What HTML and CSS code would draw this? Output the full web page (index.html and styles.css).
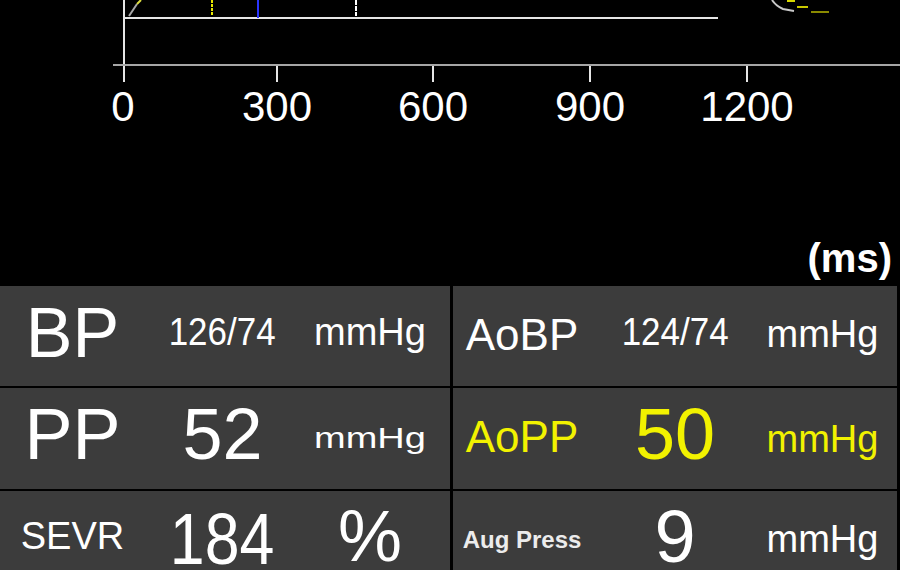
FILE: index.html
```html
<!DOCTYPE html>
<html>
<head>
<meta charset="utf-8">
<link rel="stylesheet" href="styles.css">
</head>
<body>
<div class="screen">
  <svg class="chart" width="900" height="286" viewBox="0 0 900 286">
    <line x1="124" y1="0" x2="124" y2="82" stroke="#e6e6e6" stroke-width="2"/>
    <line x1="113" y1="65" x2="900" y2="65" stroke="#a6a6a6" stroke-width="2"/>
    <line x1="124" y1="18" x2="718" y2="18" stroke="#e6e6e6" stroke-width="2"/>
    <line x1="277" y1="66" x2="277" y2="82" stroke="#e6e6e6" stroke-width="2"/>
    <line x1="433" y1="66" x2="433" y2="82" stroke="#e6e6e6" stroke-width="2"/>
    <line x1="590" y1="66" x2="590" y2="82" stroke="#e6e6e6" stroke-width="2"/>
    <line x1="747" y1="66" x2="747" y2="82" stroke="#e6e6e6" stroke-width="2"/>
    <line x1="212" y1="0" x2="212" y2="16" stroke="#e8e800" stroke-width="2" stroke-dasharray="3 1"/>
    <line x1="258" y1="0" x2="258" y2="18" stroke="#2a35ff" stroke-width="2"/>
    <line x1="356" y1="0" x2="356" y2="16" stroke="#ffffff" stroke-width="2" stroke-dasharray="5 1"/>
    <line x1="129" y1="16" x2="137" y2="4" stroke="#a8a8a8" stroke-width="2"/>
    <line x1="137" y1="4" x2="141" y2="0" stroke="#dede40" stroke-width="2"/>
    <path d="M772 0 Q776 6 783 9 L794 11" fill="none" stroke="#c8c8c8" stroke-width="2"/>
    <line x1="787" y1="1" x2="795" y2="1" stroke="#d8d800" stroke-width="2"/>
    <line x1="797" y1="7" x2="808" y2="7" stroke="#c8c800" stroke-width="2"/>
    <line x1="811" y1="12" x2="829" y2="12" stroke="#8a8a00" stroke-width="2"/>
    <g class="ticks">
      <text x="123" y="121">0</text>
      <text x="277" y="121">300</text>
      <text x="433" y="121">600</text>
      <text x="590" y="121">900</text>
      <text x="747" y="121">1200</text>
    </g>
    <text class="unit-ms" x="892" y="272">(ms)</text>
  </svg>
  <div class="panel">
    <div class="cell left">
      <span class="big r1-big">BP</span>
      <span class="frac r1-mid">126/74</span>
      <span class="unit r1-mid">mmHg</span>
    </div>
    <div class="cell right">
      <span class="label r1-mid">AoBP</span>
      <span class="frac r1-mid">124/74</span>
      <span class="unit r1-unit-r">mmHg</span>
    </div>
    <div class="cell left">
      <span class="big r2-big">PP</span>
      <span class="big r2-big">52</span>
      <span class="unit squat r2-unit">mmHg</span>
    </div>
    <div class="cell right yellow">
      <span class="label r1-mid">AoPP</span>
      <span class="big r2-big">50</span>
      <span class="unit r2-unit-r">mmHg</span>
    </div>
    <div class="cell left">
      <span class="unit r3-label">SEVR</span>
      <span class="big short narrow r3-num">184</span>
      <span class="big short r3-pct">%</span>
    </div>
    <div class="cell right">
      <span class="small r3-small">Aug Press</span>
      <span class="big short nine r3-nine">9</span>
      <span class="unit r3-unit-r">mmHg</span>
    </div>
  </div>
</div>
</body>
</html>
```
FILE: styles.css
```css
html, body {
  margin: 0;
  padding: 0;
  background: #000;
}

.screen {
  width: 900px;
  height: 570px;
  overflow: hidden;
  background: #000;
  font-family: "Liberation Sans", Arial, sans-serif;
  color: #fff;
}

.chart {
  display: block;
}

.ticks text {
  font-family: "Liberation Sans", Arial, sans-serif;
  font-size: 42px;
  fill: #fff;
  text-anchor: middle;
}

.unit-ms {
  font-family: "Liberation Sans", Arial, sans-serif;
  font-size: 40px;
  font-weight: bold;
  fill: #fff;
  text-anchor: end;
}

.panel {
  display: grid;
  grid-template-columns: 450px 444px;
  grid-template-rows: 100px 101px 79px;
  column-gap: 3px;
  row-gap: 2px;
}

.cell {
  background: #3c3c3c;
  display: grid;
  align-items: start;
  justify-items: center;
  overflow: hidden;
}

.cell.left {
  grid-template-columns: 145px 155px 140px;
}

.cell.right {
  grid-template-columns: 138px 168px 127px;
}

.cell span {
  display: block;
  line-height: 1;
  white-space: nowrap;
}

.yellow {
  color: #f2f200;
}

.big {
  font-size: 72px;
}

.cell span.short {
  line-height: 0.8;
}

.big.narrow {
  transform: scaleX(0.87);
}

.big.nine {
  font-size: 74px;
}

.frac {
  font-size: 38px;
  transform: scaleX(0.92);
}

.unit {
  font-size: 38px;
}

.unit.squat {
  transform: scaleY(0.78);
  transform-origin: 50% 84.65%;
}

.label {
  font-size: 44px;
}

.small {
  font-size: 24px;
  font-weight: bold;
  color: #ececec;
}

.r1-big { margin-top: 12px; font-size: 70px; }
.r1-mid { margin-top: 27px; }
.r1-unit-r { margin-top: 29px; }

.r2-big { margin-top: 10px; }
.r2-unit { margin-top: 28px; }
.r2-unit-r { margin-top: 32px; }

.r3-label { margin-top: 26px; }
.r3-num { margin-top: 20px; }
.r3-pct { margin-top: 17px; }
.r3-small { margin-top: 37px; }
.r3-nine { margin-top: 16px; }
.r3-unit-r { margin-top: 29px; }
```
